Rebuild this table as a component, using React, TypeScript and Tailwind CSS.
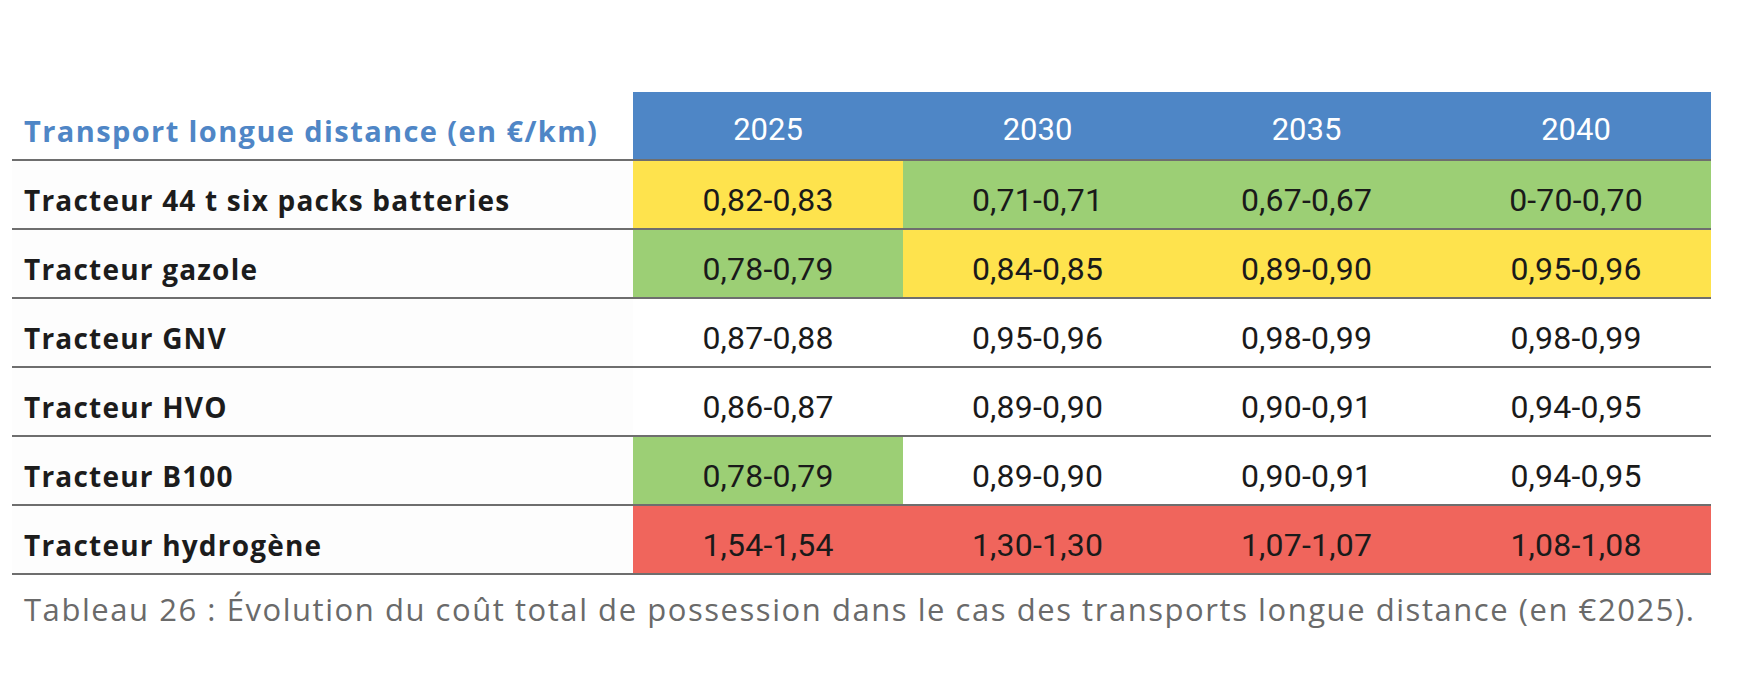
const years = ["2025", "2030", "2035", "2040"];

type Tone = "y" | "g" | "r" | "";

const rows: { label: string; cells: [string, Tone][] }[] = [
  {
    label: "Tracteur 44 t six packs batteries",
    cells: [
      ["0,82-0,83", "y"],
      ["0,71-0,71", "g"],
      ["0,67-0,67", "g"],
      ["0-70-0,70", "g"],
    ],
  },
  {
    label: "Tracteur gazole",
    cells: [
      ["0,78-0,79", "g"],
      ["0,84-0,85", "y"],
      ["0,89-0,90", "y"],
      ["0,95-0,96", "y"],
    ],
  },
  {
    label: "Tracteur GNV",
    cells: [
      ["0,87-0,88", ""],
      ["0,95-0,96", ""],
      ["0,98-0,99", ""],
      ["0,98-0,99", ""],
    ],
  },
  {
    label: "Tracteur HVO",
    cells: [
      ["0,86-0,87", ""],
      ["0,89-0,90", ""],
      ["0,90-0,91", ""],
      ["0,94-0,95", ""],
    ],
  },
  {
    label: "Tracteur B100",
    cells: [
      ["0,78-0,79", "g"],
      ["0,89-0,90", ""],
      ["0,90-0,91", ""],
      ["0,94-0,95", ""],
    ],
  },
  {
    label: "Tracteur hydrogène",
    cells: [
      ["1,54-1,54", "r"],
      ["1,30-1,30", "r"],
      ["1,07-1,07", "r"],
      ["1,08-1,08", "r"],
    ],
  },
];

const toneClass: Record<Tone, string> = {
  y: "bg-[#fee34d]",
  g: "bg-[#9ccf75]",
  r: "bg-[#f0655c]",
  "": "bg-white",
};

export default function App() {
  return (
    <div className="w-[1741px] h-[691px] bg-white pl-[12px] pt-[92px] font-['Open_Sans',sans-serif]">
      <div className="w-[1699px] grid grid-cols-[621px_270px_269px_269px_270px]">
        {/* header */}
        <div className="h-[69px] pt-[10px] border-b-2 border-[#6e6e6e] flex items-center pl-[12px] text-[29px] font-bold text-[#4f86c6] tracking-[1.4px]">
          Transport longue distance (en €/km)
        </div>
        {years.map((y) => (
          <div
            key={y}
            className="h-[69px] pt-[10px] border-b-2 border-[#6e6e6e] bg-[#4e86c6] flex items-center justify-center text-white text-[31px] font-['Roboto',sans-serif]"
          >
            {y}
          </div>
        ))}

        {rows.map((row) => (
          <>
            <div
              key={row.label}
              className="h-[69px] pt-[10px] border-b-2 border-[#6e6e6e] bg-[#fdfdfd] flex items-center pl-[12px] text-[28px] font-bold text-[#1c1c1c] tracking-[1.2px]"
            >
              {row.label}
            </div>
            {row.cells.map(([v, t], i) => (
              <div
                key={row.label + i}
                className={`h-[69px] pt-[10px] border-b-2 border-[#6e6e6e] flex items-center justify-center text-[32px] tracking-[0.2px] text-[#1a1a1a] font-['Roboto',sans-serif] ${toneClass[t]}`}
              >
                {v}
              </div>
            ))}
          </>
        ))}
      </div>
      <p className="pl-[12px] pt-[12px] text-[31px] leading-[44px] text-[#6a6a6a] tracking-[1.55px]">
        Tableau 26 : Évolution du coût total de possession dans le cas des transports longue distance (en €2025).
      </p>
    </div>
  );
}
